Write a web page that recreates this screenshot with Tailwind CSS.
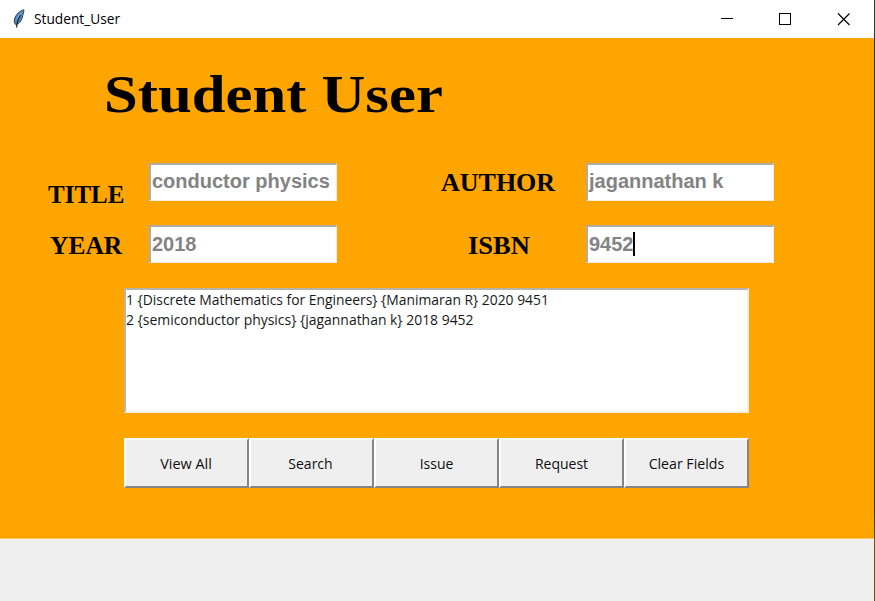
<!DOCTYPE html>
<html lang="en">
<head>
<meta charset="utf-8">
<title>Student_User</title>
<script src="https://cdn.jsdelivr.net/npm/@tailwindcss/browser@4"></script>
</head>
<body class="flex w-[875px] h-[601px] overflow-hidden bg-[#efefef] text-black">
<div class="flex flex-col w-[874px] h-full">
  <header class="flex items-center h-[38px] bg-white shrink-0">
    <svg class="ml-3 w-[14px] h-[20px]" viewBox="0 0 14 20">
      <path d="M12 .8C8 1.500 4 5 2.500 10C1.800 13 2.400 15 4 15.500C7 15 9.500 12 10.500 8C11 5 11.800 3 12 .8Z" fill="#4f86bd" stroke="#3b4654" stroke-width="1"/>
      <path d="M10.500 2.500C8 4 5.500 7 4 11L6.500 9Z" fill="#86b6e6"/>
      <path d="M8.500 6C6.500 9 5 13 4.600 18.500" fill="none" stroke="#161c26" stroke-width="1.200"/>
    </svg>
    <div class="ml-2 w-[88px] whitespace-nowrap font-['Open_Sans',sans-serif] text-[14px] leading-5"><span class="inline-block origin-left scale-x-[0.98]">Student_User</span></div>
    <svg class="ml-auto mr-[23px] w-[131px] h-[14px]" viewBox="0 0 131 14" fill="none" stroke="#000" stroke-width="1">
      <path d="M1 6.500H13" shape-rendering="crispEdges"/>
      <rect x="59.500" y="1.500" width="11" height="11" shape-rendering="crispEdges"/>
      <path d="M118 1.500L129.500 13M129.500 1.500L118 13" stroke-width="1.200"/>
    </svg>
  </header>
  <main class="h-[501px] shrink-0 bg-[#ffa500] pt-[26px] border-b border-[#ffc862]">
    <h1 class="ml-[104px] h-[60px] w-fit origin-left scale-x-[1.145] whitespace-nowrap font-['Liberation_Serif',serif] text-[53px] leading-[60px] font-bold">Student User</h1>
    <div class="mt-[39px] grid grid-cols-[149px_188px_249px_188px] grid-rows-[38px_38px] gap-y-6 font-['Liberation_Sans',sans-serif] text-[20px] font-bold text-[#838383]">
      <label class="pl-[48px] pt-[17px] font-['Liberation_Serif',serif] text-[25px] leading-[30px] text-black">TITLE</label>
      <div class="h-[38px] border-t-2 border-l-2 border-b border-r border-t-[#b0aca5] border-l-[#b0aca5] border-b-[#f3eee3] border-r-[#f3eee3] bg-white pl-px leading-[32px] whitespace-nowrap">conductor physics</div>
      <label class="pl-[104px] pt-[5px] font-['Liberation_Serif',serif] text-[25px] leading-[30px] text-black"><span class="inline-block origin-left scale-x-[1.04]">AUTHOR</span></label>
      <div class="h-[38px] border-t-2 border-l-2 border-b border-r border-t-[#b0aca5] border-l-[#b0aca5] border-b-[#f3eee3] border-r-[#f3eee3] bg-white pl-px leading-[32px] whitespace-nowrap">jagannathan k</div>
      <label class="pl-[50px] pt-[6px] font-['Liberation_Serif',serif] text-[25px] leading-[30px] text-black"><span class="inline-block origin-left scale-x-[1.02]">YEAR</span></label>
      <div class="h-[38px] border-t-2 border-l-2 border-b border-r border-t-[#b0aca5] border-l-[#b0aca5] border-b-[#f3eee3] border-r-[#f3eee3] bg-white pl-px leading-[34px]">2018</div>
      <label class="pl-[131px] pt-[6px] font-['Liberation_Serif',serif] text-[25px] leading-[30px] text-black"><span class="inline-block origin-left scale-x-[1.06]">ISBN</span></label>
      <div class="flex h-[38px] border-t-2 border-l-2 border-b border-r border-t-[#b0aca5] border-l-[#b0aca5] border-b-[#f3eee3] border-r-[#f3eee3] bg-white pl-px leading-[34px]">9452<i class="-ml-px mt-[5px] h-[24px] w-[2px] bg-black"></i></div>
    </div>
    <div class="ml-[124px] mt-[25px] h-[125px] w-[625px] border-2 border-t-[#b8b4ad] border-l-[#b8b4ad] border-b-[#f3eee3] border-r-[#f3eee3] bg-white font-['Open_Sans',sans-serif] text-[14px] leading-5 text-[#181818]">
      <p class="w-fit origin-left scale-x-[0.99] whitespace-nowrap">1 {Discrete Mathematics for Engineers} {Manimaran R} 2020 9451</p>
      <p class="w-fit origin-left scale-x-[0.995] whitespace-nowrap">2 {semiconductor physics} {jagannathan k} 2018 9452</p>
    </div>
    <div class="ml-[124px] mt-[25px] grid h-[50px] w-[625px] grid-cols-5 font-['Open_Sans',sans-serif] text-[14px] text-[#101010]">
      <button class="border-2 border-t-white border-l-white border-b-[#858585] border-r-[#858585] bg-[#efefef]"><span class="inline-block scale-x-[1.03]">View All</span></button>
      <button class="border-2 border-t-white border-l-white border-b-[#858585] border-r-[#858585] bg-[#efefef]"><span class="inline-block -translate-x-px">Search</span></button>
      <button class="border-2 border-t-white border-l-white border-b-[#858585] border-r-[#858585] bg-[#efefef]">Issue</button>
      <button class="border-2 border-t-white border-l-white border-b-[#858585] border-r-[#858585] bg-[#efefef]">Request</button>
      <button class="border-2 border-t-white border-l-white border-b-[#858585] border-r-[#858585] bg-[#efefef]"><span class="inline-block scale-x-[1.01]">Clear Fields</span></button>
    </div>
  </main>
</div>
<div class="h-full w-px bg-linear-to-b from-[#303236] from-85% to-[#705018] to-90%"></div>
</body>
</html>
